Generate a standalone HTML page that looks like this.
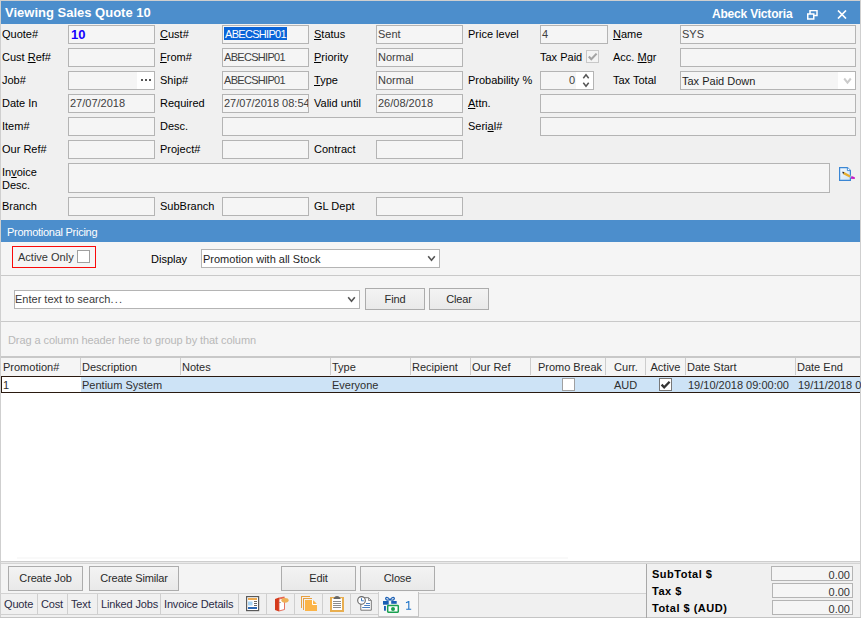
<!DOCTYPE html>
<html><head><meta charset="utf-8">
<style>
*{box-sizing:border-box;margin:0;padding:0}
html,body{width:861px;height:618px;overflow:hidden;background:#f0f0f0;font-family:"Liberation Sans",sans-serif;font-size:11px;color:#000}
.a{position:absolute}
#title{left:1px;top:1px;width:859px;height:23px;background:#4c8ecc}
#title .t{left:4px;top:4px;color:#fff;font-weight:bold;font-size:13px}
#title .r{left:711px;top:6px;color:#fff;font-weight:bold;font-size:12px;letter-spacing:-0.2px}
.lbl{position:absolute;white-space:nowrap}
.inp{position:absolute;height:19px;background:#f5f5f5;border:1px solid #b4b4b4;padding:2px 0 0 1px;color:#404040;white-space:nowrap;overflow:hidden}
u{text-decoration:underline}
#promo{left:1px;top:220px;width:859px;height:22px;background:#4c8ecc;color:#fff;font-size:11px;padding:6px 0 0 6px;letter-spacing:-0.27px}
#lower{left:1px;top:242px;width:859px;height:320px;background:#f5f5f5}
.hline{position:absolute;height:1px;background:#c9c9c9}
.btn{position:absolute;height:25px;background:linear-gradient(#f3f3f3,#e9e9e9);border:1px solid #acacac;text-align:center;padding-top:5px;color:#2a2a2a;font-size:11px;letter-spacing:-0.15px}
.gh{position:absolute;top:358px;height:17px;border-left:1px solid #cdcdcd;padding:3px 0 0 1px;color:#2a2a2a;white-space:nowrap;overflow:hidden}
</style></head><body>
<div class="a" style="left:0;top:0;width:861px;height:618px;border:1px solid #cfcfcf;border-bottom:none"></div>
<div id="title" class="a"><div class="a t">Viewing Sales Quote 10</div><div class="a r">Abeck Victoria</div>
<svg class="a" style="left:806px;top:9px" width="11" height="10" viewBox="0 0 11 10"><rect x="3" y="0.5" width="7" height="5" fill="none" stroke="#fff" stroke-width="1.5"/><rect x="0.75" y="4" width="6" height="5" fill="#4c8ecc" stroke="#fff" stroke-width="1.5"/></svg>
<svg class="a" style="left:836px;top:9px" width="10" height="9" viewBox="0 0 10 9"><path d="M1 0.5L9 8.5M9 0.5L1 8.5" stroke="#fff" stroke-width="1.7"/></svg>
</div>

<!-- row 1 -->
<div class="lbl" style="left:2px;top:28px">Quote#</div>
<div class="inp" style="left:68px;top:25px;width:87px;color:#1400ff;font-weight:bold;font-size:13px;padding-top:1px;padding-left:2px">10</div>
<div class="lbl" style="left:160px;top:28px"><u>C</u>ust#</div>
<div class="inp" style="left:222px;top:25px;width:87px;padding-left:1px;padding-top:1px"><span style="background:#0a64d8;color:#fff;padding:1px 1px 0 1px;display:inline-block;height:13px;letter-spacing:-0.7px">ABECSHIP01</span></div>
<div class="lbl" style="left:314px;top:28px"><u>S</u>tatus</div>
<div class="inp" style="left:376px;top:25px;width:87px">Sent</div>
<div class="lbl" style="left:468px;top:28px">Price level</div>
<div class="inp" style="left:540px;top:25px;width:68px">4</div>
<div class="lbl" style="left:613px;top:28px"><u>N</u>ame</div>
<div class="inp" style="left:680px;top:25px;width:176px">SYS</div>

<!-- row 2 -->
<div class="lbl" style="left:2px;top:51px">Cust <u>R</u>ef#</div>
<div class="inp" style="left:68px;top:48px;width:87px"></div>
<div class="lbl" style="left:160px;top:51px"><u>F</u>rom#</div>
<div class="inp" style="left:222px;top:48px;width:87px;letter-spacing:-0.7px">ABECSHIP01</div>
<div class="lbl" style="left:314px;top:51px"><u>P</u>riority</div>
<div class="inp" style="left:376px;top:48px;width:87px">Normal</div>
<div class="lbl" style="left:540px;top:51px">Tax Paid</div>
<div class="a" style="left:586px;top:50px;width:13px;height:13px;border:1px solid #c8c8c8;background:#f4f4f4"><svg width="11" height="11" viewBox="0 0 11 11" style="position:absolute;left:0;top:0"><path d="M1.8 5.5L4.3 8.2L9.6 2.6" fill="none" stroke="#a4a4a4" stroke-width="2.1"/></svg></div>
<div class="lbl" style="left:613px;top:51px">Acc. <u>M</u>gr</div>
<div class="inp" style="left:680px;top:48px;width:176px"></div>

<!-- row 3 -->
<div class="lbl" style="left:2px;top:74px">Job#</div>
<div class="inp" style="left:68px;top:71px;width:87px"></div>
<div class="a" style="left:137px;top:72px;width:17px;height:17px;background:#fff"></div>
<div class="a" style="left:141px;top:79px;width:2px;height:2px;background:#555"></div><div class="a" style="left:145px;top:79px;width:2px;height:2px;background:#555"></div><div class="a" style="left:149px;top:79px;width:2px;height:2px;background:#555"></div>
<div class="lbl" style="left:160px;top:74px">Ship#</div>
<div class="inp" style="left:222px;top:71px;width:87px;letter-spacing:-0.7px">ABECSHIP01</div>
<div class="lbl" style="left:314px;top:74px"><u>T</u>ype</div>
<div class="inp" style="left:376px;top:71px;width:87px">Normal</div>
<div class="lbl" style="left:468px;top:74px">Probability %</div>
<div class="inp" style="left:540px;top:71px;width:54px;text-align:right;padding-right:18px">0</div>
<div class="lbl" style="left:613px;top:74px">Tax Total</div>
<div class="inp" style="left:680px;top:71px;width:176px;color:#1e1e1e;padding-top:3px">Tax Paid Down</div>

<!-- row 4 -->
<div class="lbl" style="left:2px;top:97px">Date In</div>
<div class="inp" style="left:68px;top:94px;width:87px">27/07/2018</div>
<div class="lbl" style="left:160px;top:97px">Required</div>
<div class="inp" style="left:222px;top:94px;width:87px">27/07/2018 08:54</div>
<div class="lbl" style="left:314px;top:97px">Valid until</div>
<div class="inp" style="left:376px;top:94px;width:87px">26/08/2018</div>
<div class="lbl" style="left:468px;top:97px"><u>A</u>ttn.</div>
<div class="inp" style="left:540px;top:94px;width:316px"></div>

<!-- row 5 -->
<div class="lbl" style="left:2px;top:120px">Item#</div>
<div class="inp" style="left:68px;top:117px;width:87px"></div>
<div class="lbl" style="left:160px;top:120px">Desc.</div>
<div class="inp" style="left:222px;top:117px;width:241px"></div>
<div class="lbl" style="left:468px;top:120px">Seri<u>a</u>l#</div>
<div class="inp" style="left:540px;top:117px;width:316px"></div>

<!-- row 6 -->
<div class="lbl" style="left:2px;top:143px">Our Ref#</div>
<div class="inp" style="left:68px;top:140px;width:87px"></div>
<div class="lbl" style="left:160px;top:143px">Project#</div>
<div class="inp" style="left:222px;top:140px;width:87px"></div>
<div class="lbl" style="left:314px;top:143px">Contract</div>
<div class="inp" style="left:376px;top:140px;width:87px"></div>

<!-- invoice desc -->
<div class="lbl" style="left:2px;top:166px;line-height:13px">In<u>v</u>oice<br>Desc.</div>
<div class="inp" style="left:68px;top:163px;width:762px;height:30px"></div>

<!-- branch -->
<div class="lbl" style="left:2px;top:200px">Branch</div>
<div class="inp" style="left:68px;top:197px;width:87px"></div>
<div class="lbl" style="left:160px;top:200px">SubBranch</div>
<div class="inp" style="left:222px;top:197px;width:87px"></div>
<div class="lbl" style="left:314px;top:200px">GL Dept</div>
<div class="inp" style="left:376px;top:197px;width:87px"></div>

<div id="promo" class="a">Promotional Pricing</div>
<div id="lower" class="a"></div>
<!-- active only -->
<div class="a" style="left:12px;top:246px;width:84px;height:22px;border:1px solid #fa0a0a"></div>
<div class="lbl" style="left:18px;top:251px;color:#333">Active Only</div>
<div class="a" style="left:77px;top:250px;width:13px;height:13px;border:1px solid #a0a0a0;background:#fff"></div>
<div class="lbl" style="left:151px;top:253px">Display</div>
<div class="inp" style="left:201px;top:249px;width:239px;background:#fff;color:#1e1e1e;padding-top:3px">Promotion with all Stock</div>
<svg class="a" style="left:427px;top:255px" width="9" height="7" viewBox="0 0 9 7"><path d="M1.2 1.3L4.5 5.2L7.8 1.3" fill="none" stroke="#555" stroke-width="1.6"/></svg>
<div class="hline" style="left:1px;top:275px;width:859px"></div>
<!-- search -->
<div class="inp" style="left:14px;top:290px;width:346px;background:#fff;color:#3a3a3a;padding-top:2px;padding-left:0">Enter text to search<span style="letter-spacing:1.3px">...</span></div>
<svg class="a" style="left:347px;top:296px" width="9" height="7" viewBox="0 0 9 7"><path d="M1.2 1.3L4.5 5.2L7.8 1.3" fill="none" stroke="#555" stroke-width="1.6"/></svg>
<div class="btn" style="left:365px;top:288px;width:60px;height:22px;padding-top:4px">Find</div>
<div class="btn" style="left:429px;top:288px;width:60px;height:22px;padding-top:4px">Clear</div>
<div class="hline" style="left:1px;top:321px;width:859px"></div>
<div class="lbl" style="left:8px;top:334px;color:#b8b8b8;letter-spacing:-0.08px">Drag a column header here to group by that column</div>
<!-- grid -->
<div class="a" style="left:1px;top:356px;width:859px;height:2px;background:#c8c8c8"></div>
<div class="a" style="left:1px;top:358px;width:859px;height:18px;background:#f5f5f5"></div>
<div class="gh" style="left:1px;width:80px;border-left:none;padding-left:2px">Promotion#</div>
<div class="gh" style="left:80px;width:101px">Description</div>
<div class="gh" style="left:180px;width:151px">Notes</div>
<div class="gh" style="left:330px;width:81px">Type</div>
<div class="gh" style="left:410px;width:61px">Recipient</div>
<div class="gh" style="left:470px;width:61px">Our Ref</div>
<div class="gh" style="left:530px;width:76px;text-align:center;padding-left:3px">Promo Break</div>
<div class="gh" style="left:605px;width:41px;text-align:center;padding-left:0">Curr.</div>
<div class="gh" style="left:645px;width:40px;text-align:center;padding-left:0">Active</div>
<div class="gh" style="left:685px;width:111px">Date Start</div>
<div class="gh" style="left:795px;width:66px">Date End</div>
<div class="a" style="left:1px;top:376px;width:859px;height:17px;background:#fff;border-top:1px solid #2a1a10;border-bottom:1px solid #2a1a10;border-left:1px solid #2a1a10"></div>
<div class="a" style="left:81px;top:377px;width:779px;height:15px;background:#cde3f6"></div>
<div class="lbl" style="left:3px;top:379px;color:#2e2e2e">1</div>
<div class="lbl" style="left:82px;top:379px;color:#2e2e2e">Pentium System</div>
<div class="lbl" style="left:332px;top:379px;color:#2e2e2e">Everyone</div>
<div class="a" style="left:562px;top:378px;width:13px;height:13px;border:1px solid #a0a0a0;background:#fff"></div>
<div class="lbl" style="left:614px;top:379px;color:#2e2e2e">AUD</div>
<div class="a" style="left:659px;top:378px;width:13px;height:13px;border:1px solid #777;background:#fff"><svg width="11" height="11" viewBox="0 0 11 11" style="position:absolute;left:0;top:0"><path d="M1.6 5.6L4.2 8.3L9.6 2.8" fill="none" stroke="#333" stroke-width="2.3"/></svg></div>
<div class="lbl" style="left:688px;top:379px;color:#2e2e2e">19/10/2018 09:00:00</div>
<div class="lbl" style="left:798px;top:379px;color:#2e2e2e">19/11/2018 09:00:00</div>
<div class="a" style="left:1px;top:393px;width:859px;height:168px;background:#fff"></div>
<div class="a" style="left:17px;top:557px;width:551px;height:2px;background:#f9f9f9"></div>
<!-- bottom -->
<div class="a" style="left:1px;top:561px;width:859px;height:1px;background:#cdcdcd"></div><div class="a" style="left:1px;top:562px;width:859px;height:1px;background:#e8e8e8"></div><div class="a" style="left:1px;top:563px;width:859px;height:1px;background:#d4d4d4"></div>
<div class="a" style="left:1px;top:564px;width:859px;height:53px;background:#f0f0f0"></div>
<div class="a" style="left:1px;top:564px;width:645px;height:29px;background:#f4f4f4"></div>
<div class="btn" style="left:8px;top:566px;width:75px">Create Job</div>
<div class="btn" style="left:89px;top:566px;width:90px">Create Similar</div>
<div class="btn" style="left:281px;top:566px;width:75px">Edit</div>
<div class="btn" style="left:360px;top:566px;width:75px">Close</div>
<div class="hline" style="left:0;top:593px;width:646px;background:#d2d2d2"></div>
<div class="a" style="left:0;top:614px;width:419px;height:1px;background:#d0d0d0"></div>
<div class="a" style="left:0;top:617px;width:861px;height:1px;background:#c4c4c4"></div>
<div class="a tabs" style="left:0;top:594px;width:646px;height:20px;color:#2b2b45;letter-spacing:-0.15px">
<div class="lbl" style="left:4px;top:4px">Quote</div>
<div class="a" style="left:37px;top:0;width:1px;height:20px;background:#cfcfcf"></div>
<div class="lbl" style="left:41px;top:4px">Cost</div>
<div class="a" style="left:67px;top:0;width:1px;height:20px;background:#cfcfcf"></div>
<div class="lbl" style="left:71px;top:4px">Text</div>
<div class="a" style="left:97px;top:0;width:1px;height:20px;background:#cfcfcf"></div>
<div class="lbl" style="left:101px;top:4px">Linked Jobs</div>
<div class="a" style="left:160px;top:0;width:1px;height:20px;background:#cfcfcf"></div>
<div class="lbl" style="left:164px;top:4px">Invoice Details</div>
<div class="a" style="left:238px;top:0;width:1px;height:20px;background:#cfcfcf"></div>
<div class="a" style="left:266px;top:0;width:1px;height:20px;background:#cfcfcf"></div>
<div class="a" style="left:294px;top:0;width:1px;height:20px;background:#cfcfcf"></div>
<div class="a" style="left:322px;top:0;width:1px;height:20px;background:#cfcfcf"></div>
<div class="a" style="left:350px;top:0;width:1px;height:20px;background:#cfcfcf"></div>
<div class="a" style="left:378px;top:-2px;width:41px;height:25px;background:#f7f7f7;border-left:1px solid #cfcfcf;border-right:1px solid #c4c4c4;border-bottom:1px solid #c8c8c8"></div>
<svg class="a" style="left:405px;top:7px" width="7" height="9" viewBox="0 0 7 9"><path d="M1 1.8L3.8 0.5V8M1.2 8.2H6.2" fill="none" stroke="#1a72c8" stroke-width="1.1"/></svg>
</div>
<!-- icons -->
<svg class="a" style="left:245px;top:595px" width="15" height="17" viewBox="0 0 15 17">
<rect x="1.6" y="1.6" width="12" height="14" fill="#fff" stroke="#5a5a5a" stroke-width="1.2"/>
<rect x="3" y="3" width="9" height="2" fill="#eeaa50"/>
<rect x="3" y="6.5" width="4.5" height="4" fill="#a8d4f4"/>
<rect x="9" y="6" width="3" height="1" fill="#666"/><rect x="9" y="8" width="3" height="1" fill="#666"/><rect x="9" y="10" width="3" height="1" fill="#666"/>
<rect x="3" y="12" width="9" height="2" fill="#2a66b2"/>
</svg>
<svg class="a" style="left:274px;top:596px" width="16" height="17" viewBox="0 0 16 17">
<path d="M1 3L5 1.5L5 15.5L1 14Z" fill="#d43a1c"/>
<path d="M5 1.5L10.5 0.5L10.5 2L5 3Z" fill="#e86a50"/>
<path d="M5 3L10.5 2L10.5 13.5L5 15Z" fill="#fff" stroke="#e0503a" stroke-width="0.8"/>
<ellipse cx="11" cy="4.3" rx="3.6" ry="2.4" fill="#eeb055"/>
<rect x="5.5" y="6" width="1" height="1" fill="#555"/>
</svg>
<svg class="a" style="left:300px;top:596px" width="18" height="16" viewBox="0 0 18 16">
<path d="M1 0H10V1H2V12H1Z" fill="#e8a040"/>
<path d="M3 2H12V3H4V14H3Z" fill="#e8a040"/>
<path d="M5 4H12.5L17 8.5V15H5Z" fill="#fbb448"/>
<path d="M12.5 4V8.5H17" fill="none" stroke="#fff" stroke-width="1"/>
<path d="M13.2 4.2L16.8 7.8H13.2Z" fill="#fbb448"/>
</svg>
<svg class="a" style="left:330px;top:595px" width="15" height="18" viewBox="0 0 15 18">
<rect x="0" y="2" width="14" height="15" fill="#e8ae50"/>
<rect x="2" y="3.2" width="10" height="11.8" fill="#fff"/>
<path d="M3.3 4H10.8L10.2 3Q9.2 1.2 7 1Q4.8 1.2 3.9 3Z" fill="#666"/>
<rect x="3" y="6" width="8" height="1" fill="#8c8c8c"/><rect x="3" y="8" width="8" height="1" fill="#8c8c8c"/><rect x="3" y="10" width="8" height="1" fill="#8c8c8c"/><rect x="3" y="12" width="8" height="1" fill="#8c8c8c"/>
</svg>
<svg class="a" style="left:356px;top:596px" width="17" height="16" viewBox="0 0 17 16">
<path d="M4.8 6V14.2H15.3V4.5L12.5 1.7H8V6Z" fill="#fff" stroke="#777" stroke-width="1"/>
<path d="M12.5 1.7V4.5H15.3" fill="none" stroke="#777" stroke-width="0.8"/>
<circle cx="5.5" cy="4.4" r="3.8" fill="#fff" stroke="#666" stroke-width="1.1"/>
<path d="M5.5 2.2V4.8H7.8" fill="none" stroke="#3a78c4" stroke-width="1"/>
<rect x="10" y="7" width="4" height="1" fill="#4a7fc0"/><rect x="8.2" y="9" width="5.8" height="1" fill="#4a7fc0"/><rect x="6.2" y="11" width="7.8" height="1" fill="#4a7fc0"/>
</svg>
<svg class="a" style="left:382px;top:596px" width="18" height="18" viewBox="0 0 18 18">
<path d="M8 3.8C6.8 2.2 5.2 1.2 4.2 1.6C3.2 2 3.6 3.4 4.6 3.9C5.8 4.4 7 4.1 8 3.8ZM8 3.8C9.2 2.2 10.8 1.2 11.8 1.6C12.8 2 12.4 3.4 11.4 3.9C10.2 4.4 9 4.1 8 3.8Z" fill="none" stroke="#1a5fb4" stroke-width="1.2" stroke-linejoin="round"/>
<rect x="1" y="5" width="5.7" height="3.7" fill="#1a5fb4"/>
<rect x="9.2" y="5" width="5.5" height="2.8" fill="#1a5fb4"/>
<rect x="2" y="10" width="1.9" height="4.7" fill="#1a5fb4"/>
<rect x="5.7" y="9.6" width="10.6" height="6.6" rx="0.6" fill="#fff" stroke="#1aa050" stroke-width="1.5"/>
<circle cx="11" cy="12.9" r="2" fill="#1aa050"/>
</svg>
<!-- invoice desc icon -->
<svg class="a" style="left:838px;top:166px" width="18" height="16" viewBox="0 0 18 16">
<defs><linearGradient id="dg" x1="0" y1="0" x2="1" y2="1"><stop offset="0" stop-color="#f4f9fe"/><stop offset="1" stop-color="#cfe3f4"/></linearGradient></defs>
<path d="M1.6 1.6H9.4L12.4 4.6V14.4H1.6Z" fill="url(#dg)" stroke="#3a86d4" stroke-width="1.2"/>
<path d="M9.4 1.6V4.6H12.4" fill="#fff" stroke="#3a86d4" stroke-width="0.9"/>
<path d="M6.2 6L12.6 9.4L11.6 11.6L5.2 8.2Z" fill="#e6ac2c"/>
<path d="M4.2 5.8L6.2 6L5.2 8.2Z" fill="#1e1e1e"/>
<path d="M12.6 9.4L13.6 9.9L12.6 12.1L11.6 11.6Z" fill="#8cc4ea"/>
<path d="M13.6 9.9L16.8 11.2V13L12.6 12.8Z" fill="#c41cc4"/>
</svg>
<!-- spin -->
<div class="a" style="left:576px;top:72px;width:17px;height:17px;background:#fff"></div>
<svg class="a" style="left:582px;top:73px" width="8" height="15" viewBox="0 0 8 15"><path d="M1.3 5.2L4 1.8L6.7 5.2M1.3 9.8L4 13.2L6.7 9.8" fill="none" stroke="#555" stroke-width="1.5"/></svg>
<!-- tax total arrow -->
<div class="a" style="left:838px;top:72px;width:17px;height:17px;background:#fff"></div>
<svg class="a" style="left:843px;top:77px" width="9" height="8" viewBox="0 0 9 8"><path d="M1.2 1.5L4.5 5.6L7.8 1.5" fill="none" stroke="#cbcbcb" stroke-width="2"/></svg>
<div class="a" style="left:646px;top:564px;width:1px;height:54px;background:#a8a8a8"></div>
<div class="lbl" style="left:652px;top:568px;font-weight:bold;letter-spacing:0.5px">SubTotal $</div>
<div class="lbl" style="left:652px;top:585px;font-weight:bold;letter-spacing:0.5px">Tax $</div>
<div class="lbl" style="left:652px;top:602px;font-weight:bold;letter-spacing:0.5px">Total $ (AUD)</div>
<div class="inp" style="left:771px;top:566px;width:82px;height:15px;padding:1px 2px 0 0;text-align:right;line-height:14px;color:#333">0.00</div>
<div class="inp" style="left:772px;top:583px;width:81px;height:15px;padding:1px 2px 0 0;text-align:right;line-height:14px;color:#333">0.00</div>
<div class="inp" style="left:772px;top:600px;width:81px;height:15px;padding:1px 2px 0 0;text-align:right;line-height:14px;color:#333">0.00</div>

</body></html>
